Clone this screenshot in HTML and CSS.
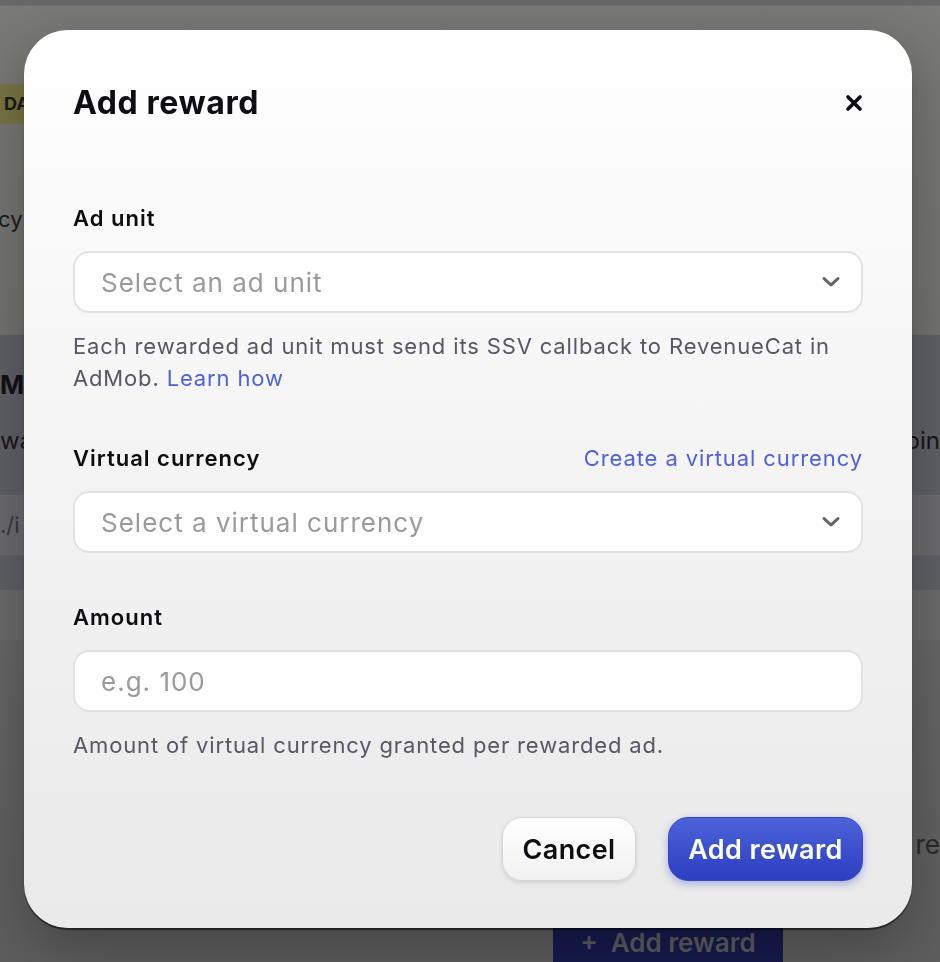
FILE: index.html
```html
<!DOCTYPE html>
<html lang="en">
<head>
    <meta charset="UTF-8">
    <meta name="viewport" content="width=device-width, initial-scale=1.0">
    <title>Add reward</title>
    <link rel="stylesheet" href="styles.css">
</head>
<body>
    <!-- Dimmed page behind the dialog -->
    <div class="page">
        <div class="page-top"></div>
        <div class="page-row badge-row">
            <span class="badge">DAILY</span>
        </div>
        <div class="page-row currency-row">
            <span class="faded-text">cy</span>
        </div>
        <section class="page-band">
            <div class="band-title">M</div>
            <div class="band-line">
                <span>wa</span>
                <span>oin</span>
            </div>
            <div class="band-input">./i</div>
        </section>
        <div class="page-strip"></div>
        <div class="page-row footer-row">
            <span></span>
            <span>r re</span>
        </div>
        <div class="page-actions">
            <span class="page-btn">+&nbsp; Add reward</span>
        </div>
    </div>

    <!-- Dialog -->
    <div class="overlay">
        <div class="modal">
            <div class="modal-header">
                <h2>Add reward</h2>
                <button class="close-btn" aria-label="Close">
                    <svg width="18" height="18" viewBox="0 0 18 18">
                        <path d="M3 3 L15 15 M15 3 L3 15" stroke="#0d0d12" stroke-width="3.6" stroke-linecap="round"/>
                    </svg>
                </button>
            </div>

            <div class="field">
                <label class="field-label">Ad unit</label>
                <div class="select">
                    <span>Select an ad unit</span>
                    <svg width="20" height="12" viewBox="0 0 20 12">
                        <path d="M3 2.5 L10 9 L17 2.5" fill="none" stroke="#606066" stroke-width="3" stroke-linecap="round" stroke-linejoin="round"/>
                    </svg>
                </div>
                <p class="help">Each rewarded ad unit must send its SSV callback to RevenueCat in AdMob. <a href="#">Learn how</a></p>
            </div>

            <div class="field">
                <div class="label-row">
                    <label class="field-label">Virtual currency</label>
                    <a href="#" class="label-link">Create a virtual currency</a>
                </div>
                <div class="select">
                    <span>Select a virtual currency</span>
                    <svg width="20" height="12" viewBox="0 0 20 12">
                        <path d="M3 2.5 L10 9 L17 2.5" fill="none" stroke="#606066" stroke-width="3" stroke-linecap="round" stroke-linejoin="round"/>
                    </svg>
                </div>
            </div>

            <div class="field">
                <label class="field-label">Amount</label>
                <input class="text-input" type="text" placeholder="e.g. 100">
                <p class="help">Amount of virtual currency granted per rewarded ad.</p>
            </div>

            <div class="modal-actions">
                <button class="btn btn-secondary">Cancel</button>
                <button class="btn btn-primary">Add reward</button>
            </div>
        </div>
    </div>
</body>
</html>
```

FILE: styles.css
```css
body {
    margin: 0;
    padding: 0;
    font-family: 'Inter', 'Noto Sans', sans-serif;
    background: #747471;
    color: #111;
    height: 962px;
    overflow: hidden;
}

/* Page behind the overlay */
.page {
    height: 962px;
    background: linear-gradient(180deg, #7a7a76 0%, #727270 40%, #666666 70%, #5e5e5e 100%);
}

.page-top {
    height: 5px;
    background: #686868;
    border-bottom: 1px solid #6f6f6f;
}

.page-row {
    display: flex;
    justify-content: space-between;
    color: #1a1a1a;
    font-size: 22px;
}

.badge-row {
    margin-top: 78px;
}

.badge {
    display: inline-block;
    height: 40px;
    line-height: 40px;
    padding: 0 10px 0 4px;
    background: #7a7544;
    font-weight: 700;
    font-size: 18px;
    color: #1a1a18;
}

.currency-row {
    margin-top: 82px;
}

.faded-text {
    margin-left: -2px;
}

.page-band {
    margin-top: 103px;
    height: 255px;
    background: #606168;
    padding-top: 34px;
    box-sizing: border-box;
}

.band-title {
    font-size: 26px;
    font-weight: 700;
    color: #121214;
}

.band-line {
    display: flex;
    justify-content: space-between;
    margin-top: 26px;
    font-size: 24px;
    color: #17171a;
}

.band-input {
    margin-top: 40px;
    height: 60px;
    line-height: 58px;
    background: #6c6c70;
    border-top: 1px solid #707075;
    border-bottom: 1px solid #707075;
    box-sizing: border-box;
    font-size: 22px;
    color: #38383c;
}

.page-strip {
    height: 50px;
    background: #6c6c6c;
}

.footer-row {
    margin-top: 189px;
    font-size: 26px;
    color: #2a2a2a;
}

.page-actions {
    margin-top: 61px;
    padding-left: 553px;
}

.page-btn {
    display: inline-block;
    width: 230px;
    height: 44px;
    line-height: 44px;
    text-align: center;
    background: #161a4c;
    border-radius: 4px;
    color: #5c5c5e;
    font-size: 26px;
    font-weight: 600;
    vertical-align: top;
}

/* Overlay and dialog */
.overlay {
    position: fixed;
    top: 0;
    left: 0;
    width: 940px;
    height: 962px;
}

.modal {
    position: absolute;
    top: 30px;
    left: 24px;
    width: 888px;
    height: 898px;
    box-sizing: border-box;
    padding: 55px 49px 46px 49px;
    border-radius: 44px;
    background: linear-gradient(180deg, #ffffff 0%, #f7f7f7 35%, #efefef 70%, #eaeaea 100%);
    box-shadow: 0 2px 1px rgba(0, 0, 0, 0.55), 0 18px 60px rgba(0, 0, 0, 0.3);
}

.modal-header {
    display: flex;
    justify-content: space-between;
    align-items: center;
    margin-bottom: 83px;
}

.modal-header h2 {
    margin: 0;
    font-size: 32px;
    line-height: 36px;
    letter-spacing: 0.6px;
    font-weight: 700;
    color: #0d0d12;
}

.close-btn {
    background: none;
    border: none;
    padding: 0;
    margin-right: -3px;
    width: 24px;
    height: 24px;
    display: flex;
    align-items: center;
    justify-content: center;
    cursor: pointer;
}

.field + .field {
    margin-top: 50px;
}

.field-label {
    display: block;
    font-size: 22px;
    line-height: 28px;
    letter-spacing: 1px;
    font-weight: 600;
    color: #0d0d12;
}

.label-row {
    display: flex;
    justify-content: space-between;
    align-items: center;
}

.label-link {
    font-size: 22px;
    letter-spacing: 0.9px;
    color: #4e62dc;
    text-decoration: none;
}

.select,
.text-input {
    margin-top: 19px;
    height: 62px;
    box-sizing: border-box;
    border: 2px solid #e2e2e2;
    border-radius: 16px;
    background: #ffffff;
}

.select {
    display: flex;
    justify-content: space-between;
    align-items: center;
    padding: 0 20px 0 26px;
    font-size: 26px;
    letter-spacing: 1px;
    color: #9a9a9a;
}

.text-input {
    display: block;
    width: 100%;
    padding: 0 26px;
    font-family: inherit;
    font-size: 26px;
    letter-spacing: 1px;
    color: #111;
    outline: none;
}

.text-input::placeholder {
    color: #9a9a9a;
}

.help {
    margin: 17px 0 0;
    font-size: 22px;
    line-height: 32px;
    letter-spacing: 0.85px;
    color: #575766;
}

.help a {
    color: #4e62dc;
    text-decoration: none;
}

.modal-actions {
    display: flex;
    justify-content: flex-end;
    gap: 32px;
    margin-top: 56px;
}

.btn {
    height: 64px;
    border-radius: 20px;
    font-family: inherit;
    font-size: 27px;
    letter-spacing: 0.4px;
    font-weight: 600;
    cursor: pointer;
}

.btn-secondary {
    width: 134px;
    background: linear-gradient(180deg, #ffffff 0%, #f1f1f1 100%);
    border: 1px solid #d6d6d6;
    color: #0d0d12;
    box-shadow: 0 2px 4px rgba(0, 0, 0, 0.12);
}

.btn-primary {
    width: 195px;
    background: linear-gradient(180deg, #4d62da 0%, #2b3fc0 100%);
    border: 1px solid #3346c8;
    color: #ffffff;
    box-shadow: 0 3px 8px rgba(40, 60, 190, 0.35);
}
```
